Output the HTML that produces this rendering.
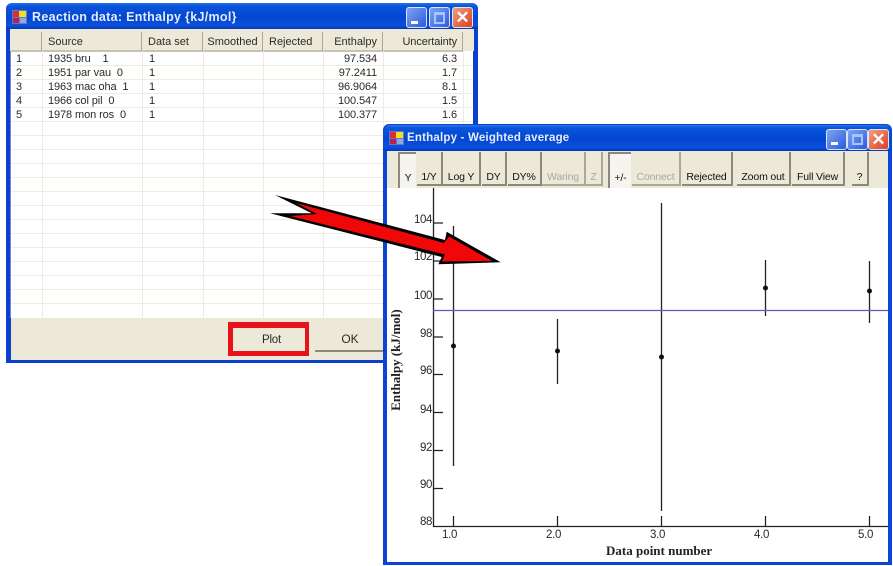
<!DOCTYPE html>
<html><head><meta charset="utf-8"><style>
html,body{margin:0;padding:0;background:#fff;width:893px;height:566px;overflow:hidden}
body{position:relative;font-family:"Liberation Sans",sans-serif;font-size:11px;color:#2a2a2a}
#p{position:absolute;left:0;top:0;width:893px;height:566px;filter:blur(.35px)}
.a{position:absolute;white-space:nowrap}
.win{position:absolute;background:#0a3fd0;border-radius:6px 6px 0 0}
.title{position:absolute;border-radius:6px 6px 0 0;background:linear-gradient(#2a74e8 0,#0a54dc 12%,#0346d0 55%,#0a50dc 85%,#0438b8 100%)}
.tt{position:absolute;color:#e4ecff;font-weight:bold;white-space:nowrap}
.b{position:absolute;width:19px;height:19px;border:1px solid #dde4f8;border-radius:3px;background:linear-gradient(135deg,#7fa4f0,#2a5ae0)}
.b.x{background:linear-gradient(135deg,#f0a080,#d84020)}
.hl{position:absolute;left:11px;width:462px;height:1px;background:#efecdf}
.vl{position:absolute;top:51px;width:1px;height:267px;background:#efecdf}
.hc{position:absolute;top:32px;height:18px;background:#ece9d8;border-right:1px solid #aca899;border-bottom:2px solid #c8c4b4;text-align:center;line-height:21px}
.c{position:absolute;height:14px;line-height:15px;white-space:nowrap;letter-spacing:-.1px}
.r{text-align:right}
.tb{position:absolute;top:152px;height:34px;background:#ece9d8;border-right:2px solid #8c897c;border-bottom:2px solid #8c897c;box-sizing:border-box;text-align:center;line-height:50px;font-size:10.5px;letter-spacing:-.15px;color:#111;white-space:nowrap}
.tb.d{color:#aaa8a0;border-color:#aca899}
.tb.on{background:#f5f4ee;border:0;border-left:2px solid #8c897c;border-top:2px solid #8c897c;line-height:49px;height:36px}
.yl{position:absolute;width:25px;text-align:right;left:407px;font-size:11.5px;letter-spacing:-.4px;color:#2a2a2a}
.xl{position:absolute;top:529px;font-size:11.5px;letter-spacing:-.3px;color:#2a2a2a}
</style></head><body><div id="p">

<!-- Window 1 -->
<div class="win" style="left:6px;top:3px;width:472px;height:360px"></div>
<div class="title" style="left:6px;top:3px;width:472px;height:26px"></div>
<svg class="a" style="left:12px;top:10px" width="15" height="14"><rect width="15" height="14" fill="#5a78d8"/><rect x="1" y="1" width="6" height="6" fill="#d83030"/><rect x="7" y="1" width="7" height="6" fill="#f4e020"/><rect x="1" y="8" width="6" height="5" fill="#c02040"/><rect x="8" y="8" width="6" height="5" fill="#90a8e0"/></svg>
<div class="tt" style="left:32px;top:10px;font-size:12.5px;letter-spacing:.3px">Reaction data: Enthalpy {kJ/mol}</div>
<div class="b" style="left:406px;top:7px"></div><div class="a" style="left:411px;top:21px;width:7px;height:3px;background:#fff"></div>
<div class="b" style="left:429px;top:7px"></div><div class="a" style="left:434px;top:12px;width:7px;height:7px;border:2px solid #a8c4ff;border-top-width:3px"></div>
<div class="b x" style="left:452px;top:7px"></div><div class="a" style="left:452px;top:7px;width:21px;text-align:center;color:#fff;font-size:17px;line-height:21px;font-weight:bold">✕</div>

<div class="a" style="left:10px;top:29px;width:464px;height:22px;background:#ece9d8"></div>
<div class="a" style="left:11px;top:318px;width:463px;height:42px;background:#ece9d8"></div>
<div class="a" style="left:11px;top:32px;width:462px;height:286px;background:#fff"></div>
<div class="a" style="left:10px;top:51px;width:1px;height:267px;background:#6f8fc8"></div>
<div class="a" style="left:11px;top:32px;width:462px;height:19px;background:#ece9d8"></div>
<div class="hc" style="left:11px;width:30px"></div>
<div class="hc" style="left:42px;width:99px;text-align:left;text-indent:6px">Source</div>
<div class="hc" style="left:142px;width:60px;text-align:left;text-indent:6px">Data set</div>
<div class="hc" style="left:203px;width:59px">Smoothed</div>
<div class="hc" style="left:263px;width:59px;text-align:left;text-indent:6px">Rejected</div>
<div class="hc" style="left:323px;width:59px;text-align:right"><span style="margin-right:5px">Enthalpy</span></div>
<div class="hc" style="left:383px;width:79px;text-align:right"><span style="margin-right:5px;letter-spacing:-.1px">Uncertainty</span></div>

<div class="vl" style="left:42px"></div><div class="vl" style="left:142px"></div><div class="vl" style="left:203px"></div><div class="vl" style="left:263px"></div><div class="vl" style="left:323px"></div><div class="vl" style="left:383px"></div><div class="vl" style="left:463px"></div>
<div class="hl" style="top:65px"></div><div class="hl" style="top:79px"></div><div class="hl" style="top:93px"></div><div class="hl" style="top:107px"></div><div class="hl" style="top:121px"></div><div class="hl" style="top:135px"></div><div class="hl" style="top:149px"></div><div class="hl" style="top:163px"></div><div class="hl" style="top:177px"></div><div class="hl" style="top:191px"></div><div class="hl" style="top:205px"></div><div class="hl" style="top:219px"></div><div class="hl" style="top:233px"></div><div class="hl" style="top:247px"></div><div class="hl" style="top:261px"></div><div class="hl" style="top:275px"></div><div class="hl" style="top:289px"></div><div class="hl" style="top:303px"></div>

<div class="c" style="left:16px;top:52px">1</div><div class="c" style="left:48px;top:52px">1935 bru &nbsp;&nbsp; 1</div><div class="c" style="left:149px;top:52px">1</div><div class="c r" style="left:323px;top:52px;width:54px">97.534</div><div class="c r" style="left:383px;top:52px;width:74px">6.3</div>
<div class="c" style="left:16px;top:66px">2</div><div class="c" style="left:48px;top:66px">1951 par vau&nbsp; 0</div><div class="c" style="left:149px;top:66px">1</div><div class="c r" style="left:323px;top:66px;width:54px">97.2411</div><div class="c r" style="left:383px;top:66px;width:74px">1.7</div>
<div class="c" style="left:16px;top:80px">3</div><div class="c" style="left:48px;top:80px">1963 mac oha&nbsp; 1</div><div class="c" style="left:149px;top:80px">1</div><div class="c r" style="left:323px;top:80px;width:54px">96.9064</div><div class="c r" style="left:383px;top:80px;width:74px">8.1</div>
<div class="c" style="left:16px;top:94px">4</div><div class="c" style="left:48px;top:94px">1966 col pil&nbsp; 0</div><div class="c" style="left:149px;top:94px">1</div><div class="c r" style="left:323px;top:94px;width:54px">100.547</div><div class="c r" style="left:383px;top:94px;width:74px">1.5</div>
<div class="c" style="left:16px;top:108px">5</div><div class="c" style="left:48px;top:108px">1978 mon ros&nbsp; 0</div><div class="c" style="left:149px;top:108px">1</div><div class="c r" style="left:323px;top:108px;width:54px">100.377</div><div class="c r" style="left:383px;top:108px;width:74px">1.6</div>

<div class="a" style="left:228px;top:322px;width:72px;height:23px;background:#ece9d8;border:solid #e8121a;border-width:6px 4px 5px 5px"></div>
<div class="a" style="left:233px;top:328px;width:77px;height:23px;text-align:center;line-height:24px;font-size:11.5px;letter-spacing:-.2px;color:#2a2a2a">Plot</div>
<div class="a" style="left:315px;top:329px;width:70px;height:21px;background:#ece9d8;border-bottom:2px solid #8c897c;text-align:center;line-height:21px;font-size:12px;color:#2a2a2a">OK</div>

<!-- Window 2 -->
<div class="win" style="left:383px;top:124px;width:509px;height:441px;background:#0a45d8"></div>
<div class="title" style="left:384px;top:125px;width:507px;height:26px"></div>
<svg class="a" style="left:389px;top:131px" width="15" height="14"><rect width="15" height="14" fill="#5a78d8"/><rect x="1" y="1" width="6" height="6" fill="#d83030"/><rect x="7" y="1" width="7" height="6" fill="#f4e020"/><rect x="1" y="8" width="6" height="5" fill="#c02040"/><rect x="8" y="8" width="6" height="5" fill="#90a8e0"/></svg>
<div class="tt" style="left:407px;top:132px;font-size:11.5px;letter-spacing:.2px">Enthalpy - Weighted average</div>
<div class="b" style="left:826px;top:129px"></div><div class="a" style="left:831px;top:142px;width:7px;height:3px;background:#fff"></div>
<div class="b" style="left:847px;top:129px"></div><div class="a" style="left:852px;top:134px;width:7px;height:6px;border:2px solid #a8c4ff;border-top-width:3px"></div>
<div class="b x" style="left:868px;top:129px"></div><div class="a" style="left:868px;top:129px;width:21px;text-align:center;color:#fff;font-size:17px;line-height:21px;font-weight:bold">✕</div>

<div class="a" style="left:387px;top:151px;width:501px;height:411px;background:#fff"></div>
<div class="a" style="left:387px;top:151px;width:501px;height:37px;background:#ece9d8"></div>

<div class="tb on" style="left:398px;width:18px">Y</div>
<div class="tb" style="left:417px;width:26px">1/Y</div>
<div class="tb" style="left:443px;width:38px">Log Y</div>
<div class="tb" style="left:482px;width:25px">DY</div>
<div class="tb" style="left:508px;width:34px">DY%</div>
<div class="tb d" style="left:542px;width:44px">Waring</div>
<div class="tb d" style="left:586px;width:17px">Z</div>
<div class="tb on" style="left:608px;width:23px">+/-</div>
<div class="tb d" style="left:632px;width:49px">Connect</div>
<div class="tb" style="left:682px;width:51px">Rejected</div>
<div class="tb" style="left:737px;width:54px">Zoom out</div>
<div class="tb" style="left:792px;width:53px">Full View</div>
<div class="tb" style="left:852px;width:17px">?</div>

<div class="yl" style="top:214px">104</div>
<div class="yl" style="top:251px">102</div>
<div class="yl" style="top:290px">100</div>
<div class="yl" style="top:328px">98</div>
<div class="yl" style="top:365px">96</div>
<div class="yl" style="top:404px">94</div>
<div class="yl" style="top:442px">92</div>
<div class="yl" style="top:479px">90</div>
<div class="yl" style="top:516px">88</div>
<div class="xl" style="left:442px">1.0</div>
<div class="xl" style="left:546px">2.0</div>
<div class="xl" style="left:650px">3.0</div>
<div class="xl" style="left:754px">4.0</div>
<div class="xl" style="left:858px">5.0</div>
<div class="a" style="left:606px;top:543px;font-family:'Liberation Serif',serif;font-weight:bold;font-size:13px;color:#222">Data point number</div>
<div class="a" style="left:396px;top:360px;font-family:'Liberation Serif',serif;font-weight:bold;font-size:13px;color:#222;transform:translate(-50%,-50%) rotate(-90deg)">Enthalpy (kJ/mol)</div>

<svg class="a" style="left:0;top:0" width="893" height="566">
<g stroke="#222" stroke-width="1.3" fill="none">
<path d="M433.5 188V526.5H888"/>
<path d="M433 223h10M433 261h10M433 299h10M433 337h10M433 374.5h10M433 412.5h10M433 450.5h10M433 488.5h10"/>
<path d="M453.5 516v10M557.5 516v10M661.5 516v10M765.5 516v10M869.5 516v10"/>
<path d="M453.5 226V466M557.5 319V384M661.5 203V511M765.5 260V316M869.5 261V323"/>
</g>
<path d="M433 310.5H888" stroke="#5a5ab8" stroke-width="1.2"/>
<g fill="#111"><circle cx="453.5" cy="346" r="2.5"/><circle cx="557.5" cy="351" r="2.5"/><circle cx="661.5" cy="357" r="2.5"/><circle cx="765.5" cy="288" r="2.5"/><circle cx="869.5" cy="291" r="2.5"/></g>
<polygon points="275,195 445,240 446.7,231.7 500.7,262.3 438.3,264.3 441.7,257 270,213.3 311.7,213.3" fill="#000"/>
<polygon points="296,203 444,243 449,236.5 492,261 442,261.5 445,254.5 290,216 317,214" fill="#f00808"/>
</svg>
</div></body></html>
